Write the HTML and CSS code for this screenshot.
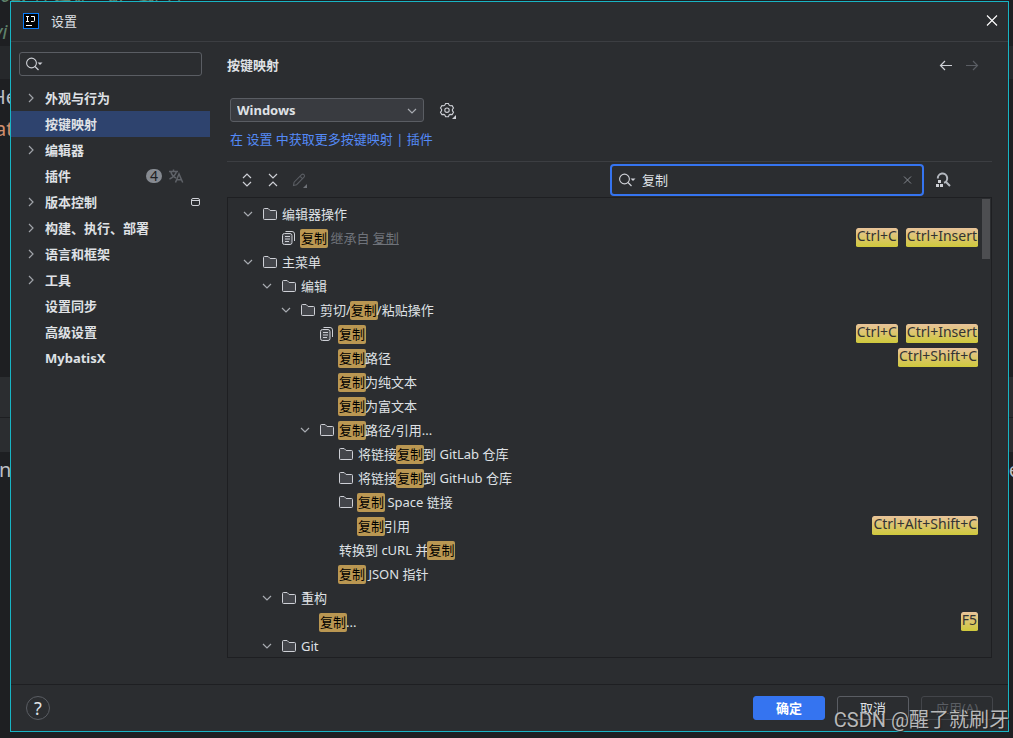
FILE: index.html
```html
<!DOCTYPE html>
<html lang="zh-CN">
<head>
<meta charset="utf-8">
<title>设置</title>
<link rel="stylesheet" href="styles.css">
</head>
<body>
<svg class="defs" width="0" height="0" aria-hidden="true">
  <symbol id="right" viewBox="0 0 16 16"><path d="M6 4l4 4-4 4" fill="none" stroke="#a0a3a9" stroke-width="1.2"/></symbol>
  <symbol id="down" viewBox="0 0 16 16"><path d="M4 6l4 4 4-4" fill="none" stroke="#a8abb1" stroke-width="1.2"/></symbol>
  <symbol id="folder" viewBox="0 0 16 16"><path d="M1.5 3.5a1 1 0 0 1 1-1h3.6l2 2h5.4a1 1 0 0 1 1 1v7a1 1 0 0 1-1 1h-11a1 1 0 0 1-1-1z" fill="#43454a" stroke="#ced0d6"/></symbol>
  <symbol id="copy" viewBox="0 0 16 16"><path d="M4.500 1.500H11a2.500 2.500 0 0 1 2.500 2.500V11" fill="none" stroke="#ced0d6"/><rect x="1.500" y="3.500" width="9.500" height="11" rx="2" fill="#43454a" stroke="#ced0d6"/><path d="M4 6.500h5M4 9h5M4 11.500h4" stroke="#ced0d6"/></symbol>
  <symbol id="search" viewBox="0 0 20 16"><circle cx="6.500" cy="7" r="4.9" fill="none" stroke="#ced0d6" stroke-width="1.1"/><path d="M10 10.500L13.500 14" stroke="#ced0d6" stroke-width="1.2"/><path d="M12.500 6.500h5l-2.500 2.500z" fill="#ced0d6"/></symbol>
</svg>

<div class="editor" aria-hidden="true">
  <div class="band band-top"></div>
  <div class="band band-mid"></div>
  <span class="code code-a">02. 什么是   ar  或 者</span>
  <span class="code code-b">vi</span>
  <span class="code code-c">He</span>
  <span class="code code-d">at</span>
  <span class="code code-e">n</span>
  <span class="code code-f">e</span>
</div>

<div class="dialog" role="dialog" aria-label="设置">
  <header class="titlebar">
    <svg class="logo" width="16" height="16" viewBox="0 0 16 16"><rect x=".5" y=".5" width="15" height="15" fill="#000" stroke="#087cfa"/><path d="M3 3.500h3M4.500 3.500v5M3 8.500h3M8 3.500h3.500v4q0 1-1 1H8M3 12.500h6" fill="none" stroke="#fff"/></svg>
    <h1 class="title">设置</h1>
    <button class="icon-btn" aria-label="关闭"><svg width="16" height="16" viewBox="0 0 16 16"><path d="M3 2.500l10 10M13 2.500l-10 10" stroke="#fff" stroke-width="1.100"/></svg></button>
  </header>

  <div class="body">
    <nav class="sidebar">
      <label class="field">
        <svg width="20" height="16"><use href="#search"/></svg>
        <input class="field-input" type="text" aria-label="搜索设置">
      </label>
      <ul class="menu">
        <li class="item"><svg class="arrow"><use href="#right"/></svg><span>外观与行为</span></li>
        <li class="item selected"><span class="arrow"></span><span>按键映射</span></li>
        <li class="item"><svg class="arrow"><use href="#right"/></svg><span>编辑器</span></li>
        <li class="item"><span class="arrow"></span><span class="grow">插件</span><span class="count">4</span>
          <svg class="lang" width="16" height="16" viewBox="0 0 16 16" fill="none" stroke="#5f6268" stroke-width="1.500"><path d="M1 3.500h9M5.500 1.500v2M8.500 3.500C7.500 7 5 9.500 1.500 11M2.800 3.500C3.500 6.500 5.500 8.800 8 10M7.500 14.500l3.500-8.500 3.700 8.500M8.600 11.800h5"/></svg></li>
        <li class="item"><svg class="arrow"><use href="#right"/></svg><span class="grow">版本控制</span>
          <svg class="project" width="16" height="16" viewBox="0 0 16 16"><rect x="3.500" y="4.500" width="8" height="7" rx="1.500" fill="none" stroke="#ced0d6"/><path d="M3.500 6.500h8" stroke="#ced0d6"/></svg></li>
        <li class="item"><svg class="arrow"><use href="#right"/></svg><span>构建、执行、部署</span></li>
        <li class="item"><svg class="arrow"><use href="#right"/></svg><span>语言和框架</span></li>
        <li class="item"><svg class="arrow"><use href="#right"/></svg><span>工具</span></li>
        <li class="item"><span class="arrow"></span><span>设置同步</span></li>
        <li class="item"><span class="arrow"></span><span>高级设置</span></li>
        <li class="item"><span class="arrow"></span><span>MybatisX</span></li>
      </ul>
    </nav>

    <main class="main">
      <div class="heading">
        <h2 class="crumb">按键映射</h2>
        <button class="icon-btn" aria-label="后退"><svg width="16" height="16" viewBox="0 0 16 16" fill="none" stroke="#ced0d6" stroke-width="1.200"><path d="M14 8.500H2.500M7 4L2.500 8.500 7 13"/></svg></button>
        <button class="icon-btn" aria-label="前进"><svg width="16" height="16" viewBox="0 0 16 16" fill="none" stroke="#5a5d63" stroke-width="1.200"><path d="M2 8.500h11.500M9 4l4.500 4.500L9 13"/></svg></button>
      </div>
      <div class="scheme">
        <div class="select-wrap">
          <select class="select" aria-label="按键映射方案"><option>Windows</option></select>
          <svg class="select-arrow" width="16" height="16"><use href="#down"/></svg>
        </div>
        <button class="icon-btn" aria-label="方案操作"><svg width="20" height="20" viewBox="0 0 20 20"><path d="M7.600 3.500h2.800l.8 1.700 1 .6 1.900-.2 1.400 2.400-1.100 1.500v1.200l1.100 1.500-1.400 2.400-1.900-.2-1 .6-.8 1.700H7.600l-.8-1.700-1-.6-1.900.2-1.400-2.400 1.100-1.500V9.500L2.500 8l1.400-2.400 1.900.2 1-.6z" fill="none" stroke="#ced0d6" stroke-width="1.100"/><circle cx="9" cy="10.200" r="2.200" fill="none" stroke="#ced0d6" stroke-width="1.100"/><path d="M18 15v4h-4z" fill="#ced0d6"/></svg></button>
      </div>
      <p class="links"><a href="#">在 设置 中获取更多按键映射</a> <span>|</span> <a href="#">插件</a></p>

      <div class="toolbar">
        <button class="icon-btn" aria-label="全部展开"><svg width="16" height="16" viewBox="0 0 16 16" fill="none" stroke="#ced0d6" stroke-width="1.200"><path d="M4 6l4-4 4 4M4 10l4 4 4-4"/></svg></button>
        <button class="icon-btn" aria-label="全部收起"><svg width="16" height="16" viewBox="0 0 16 16" fill="none" stroke="#ced0d6" stroke-width="1.200"><path d="M4 2l4 4 4-4M4 14l4-4 4 4"/></svg></button>
        <button class="icon-btn" aria-label="编辑快捷键"><svg width="18" height="16" viewBox="0 0 18 16"><path d="M2.500 13.500l.6-3.300 7.500-7.600q1.200-1 2.400 0 1.200 1.300 0 2.500l-7.400 7.600zM9 4.200l2.600 2.600" fill="none" stroke="#5a5d63" stroke-width="1.100"/><path d="M16 12v4h-4z" fill="#6f7278"/></svg></button>
        <label class="field focused">
          <svg width="20" height="16"><use href="#search"/></svg>
          <input class="field-input" type="text" value="复制" aria-label="搜索操作">
          <button class="icon-btn" aria-label="清除"><svg width="16" height="16" viewBox="0 0 16 16"><path d="M4 4.500l7 7M11 4.500l-7 7" stroke="#868a91"/></svg></button>
        </label>
        <button class="icon-btn" aria-label="按快捷键查找"><svg width="18" height="18" viewBox="0 0 18 18"><path d="M3.800 7.500a4.700 4.700 0 1 1 6.200 4.200M11.500 10.500l4.500 4.500" fill="none" stroke="#b4b8bf" stroke-width="2"/><path d="M4 9h3v3H4zM2 13h3v3H2zM6 13h3v3H6z" fill="#ced0d6"/></svg></button>
      </div>

      <div class="tree">
        <ul class="rows">
          <li class="row"><svg class="twist"><use href="#down"/></svg><svg class="kind"><use href="#folder"/></svg><span class="name">编辑器操作</span></li>
          <li class="row l1"><span class="twist"></span><svg class="kind"><use href="#copy"/></svg><span class="name"><mark>复制</mark> <span class="dim">继承自 <u>复制</u></span></span><kbd>Ctrl+C</kbd><kbd>Ctrl+Insert</kbd></li>
          <li class="row"><svg class="twist"><use href="#down"/></svg><svg class="kind"><use href="#folder"/></svg><span class="name">主菜单</span></li>
          <li class="row l1"><svg class="twist"><use href="#down"/></svg><svg class="kind"><use href="#folder"/></svg><span class="name">编辑</span></li>
          <li class="row l2"><svg class="twist"><use href="#down"/></svg><svg class="kind"><use href="#folder"/></svg><span class="name">剪切/<mark>复制</mark>/粘贴操作</span></li>
          <li class="row l3"><span class="twist"></span><svg class="kind"><use href="#copy"/></svg><span class="name"><mark>复制</mark></span><kbd>Ctrl+C</kbd><kbd>Ctrl+Insert</kbd></li>
          <li class="row l3"><span class="twist"></span><span class="kind"></span><span class="name"><mark>复制</mark>路径</span><kbd>Ctrl+Shift+C</kbd></li>
          <li class="row l3"><span class="twist"></span><span class="kind"></span><span class="name"><mark>复制</mark>为纯文本</span></li>
          <li class="row l3"><span class="twist"></span><span class="kind"></span><span class="name"><mark>复制</mark>为富文本</span></li>
          <li class="row l3"><svg class="twist"><use href="#down"/></svg><svg class="kind"><use href="#folder"/></svg><span class="name"><mark>复制</mark>路径/引用...</span></li>
          <li class="row l4"><span class="twist"></span><svg class="kind"><use href="#folder"/></svg><span class="name">将链接<mark>复制</mark>到 GitLab 仓库</span></li>
          <li class="row l4"><span class="twist"></span><svg class="kind"><use href="#folder"/></svg><span class="name">将链接<mark>复制</mark>到 GitHub 仓库</span></li>
          <li class="row l4"><span class="twist"></span><svg class="kind"><use href="#folder"/></svg><span class="name"><mark>复制</mark> Space 链接</span></li>
          <li class="row l4"><span class="twist"></span><span class="kind"></span><span class="name"><mark>复制</mark>引用</span><kbd>Ctrl+Alt+Shift+C</kbd></li>
          <li class="row l3"><span class="twist"></span><span class="kind"></span><span class="name">转换到 cURL 并<mark>复制</mark></span></li>
          <li class="row l3"><span class="twist"></span><span class="kind"></span><span class="name"><mark>复制</mark> JSON 指针</span></li>
          <li class="row l1"><svg class="twist"><use href="#down"/></svg><svg class="kind"><use href="#folder"/></svg><span class="name">重构</span></li>
          <li class="row l2"><span class="twist"></span><span class="kind"></span><span class="name"><mark>复制</mark>...</span><kbd>F5</kbd></li>
          <li class="row l1"><svg class="twist"><use href="#down"/></svg><svg class="kind"><use href="#folder"/></svg><span class="name">Git</span></li>
        </ul>
        <div class="thumb"></div>
      </div>
    </main>
  </div>

  <footer class="footer">
    <button class="help" aria-label="帮助">?</button>
    <button class="btn primary">确定</button>
    <button class="btn">取消</button>
    <button class="btn" disabled>应用(A)</button>
  </footer>
</div>
<div class="watermark">CSDN @醒了就刷牙</div>
</body>
</html>
```
FILE: styles.css
```css
* { box-sizing: border-box; }

body {
  margin: 0;
  height: 100vh;
  padding: 1px 4px 6px 10px;
  position: relative;
  overflow: hidden;
  background: #1e1f22;
  color: #dfe1e5;
  font: 13px/20px "Noto Sans", "Noto Sans CJK SC", sans-serif;
}

.defs { position: absolute; }
h1, h2, p, ul { margin: 0; padding: 0; font-size: 13px; }
ul { list-style: none; }
button, input, select { font: inherit; color: inherit; }
svg { display: block; flex: none; }

/* Editor behind the dialog */
.editor { position: absolute; inset: 0; overflow: hidden; }
.band { position: absolute; left: 0; right: 0; background: #26282b; }
.band-top { top: 46px; height: 33px; }
.band-mid {
  top: 377px;
  height: 75px;
  background: linear-gradient(#2b2d30 40px, #1e1f22 40px, #1e1f22 41px, #2b2d30 41px);
}
.code {
  position: absolute;
  left: 0;
  font: 20px/24px "Noto Sans", "Noto Sans CJK SC", sans-serif;
  color: #bcbec4;
  white-space: pre;
}
.code-a { top: -17px; color: #5f826b; font-style: italic; }
.code-b { top: 20px; left: -7px; color: #5f826b; font-style: italic; }
.code-c { top: 85px; left: -9px; }
.code-d { top: 117px; left: -5px; color: #cf8e6d; }
.code-e { top: 458px; left: -1px; }
.code-f { top: 458px; left: auto; right: -7px; }

.dialog {
  position: relative;
  display: flex;
  flex-direction: column;
  height: 100%;
  background: #2b2d30;
  border: 1px solid #18b4c4;
}

.titlebar {
  display: flex;
  align-items: center;
  height: 40px;
  padding: 0 8px 2px 12px;
  border-bottom: 1px solid #3c3e42;
}
.title { flex: 1; margin-left: 12px; font-weight: 400; }

.icon-btn {
  display: flex;
  padding: 0;
  border: 0;
  background: none;
}

.body { display: flex; flex: 1; min-height: 0; }

.sidebar { width: 199px; padding-top: 10px; font-weight: 700; }
.field {
  display: flex;
  align-items: center;
  height: 24px;
  padding: 0 6px;
  border: 1px solid #5a5d63;
  border-radius: 3px;
}
.sidebar .field { margin: 0 8px 8px; padding-left: 5px; }
.field-input {
  flex: 1;
  min-width: 0;
  padding: 0;
  border: 0;
  outline: 0;
  background: none;
}
.item {
  display: flex;
  align-items: center;
  height: 26px;
  padding: 0 6px 0 12px;
}
.menu { padding-top: 1px; }
.selected { background: #2e436e; }
.arrow { width: 16px; height: 16px; margin-right: 6px; }
.grow { flex: 1; }
.count {
  width: 16px;
  height: 14px;
  margin-right: 6px;
  border-radius: 7px;
  background: #868a91;
  color: #1e1f22;
  font-size: 14px;
  font-weight: 400;
  line-height: 14px;
  text-align: center;
}
.lang { margin-right: 20px; }

.main {
  display: flex;
  flex: 1;
  flex-direction: column;
  min-width: 0;
  padding: 11px 16px 26px 17px;
}
.heading { display: flex; align-items: center; gap: 10px; height: 24px; padding-right: 12px; }
.crumb { flex: 1; }
.scheme { display: flex; align-items: center; gap: 14px; margin: 21px 3px 0; }
.select-wrap { position: relative; width: 194px; }
.select {
  display: block;
  width: 100%;
  height: 24px;
  padding: 0 6px;
  appearance: none;
  border: 1px solid #5a5d63;
  border-radius: 3px;
  background: #393b40;
  font-weight: 700;
}
.select-arrow { position: absolute; top: 5px; right: 4px; pointer-events: none; }
.links { margin: 7px 3px 12px; color: #548af7; }
.links a { color: inherit; text-decoration: none; }

.toolbar {
  display: flex;
  align-items: center;
  gap: 10px;
  height: 36px;
  padding: 0 40px 0 12px;
  border-top: 1px solid #3c3e42;
}
.toolbar .field {
  width: 314px;
  height: 32px;
  margin-left: auto;
  border: 2px solid #3574f0;
  border-radius: 4px;
}
.toolbar .field-input { margin-left: 4px; }

.tree {
  position: relative;
  flex: 1;
  min-height: 0;
  overflow: hidden;
  padding: 4px 13px 0 12px;
  border: 1px solid #1e1f22;
}
.row { display: flex; align-items: center; height: 24px; }
.l1 { padding-left: 19px; }
.l2 { padding-left: 38px; }
.l3 { padding-left: 57px; }
.l4 { padding-left: 76px; }
.twist { width: 16px; height: 16px; margin-right: 6px; }
.kind { width: 16px; height: 16px; margin-right: 4px; }
.name { flex: 1; white-space: nowrap; }
mark {
  display: inline-block;
  height: 19px;
  margin: 0 -1px;
  padding: 0 1px;
  border-radius: 2px;
  background: #ba9752;
  color: #000;
  line-height: 19px;
}
.dim { color: #6f737a; }
kbd {
  height: 20px;
  margin-left: 8px;
  padding: 0 1px;
  border-bottom: 1px solid transparent;
  border-radius: 2px;
  background: linear-gradient(#e8c39a, #cfc93c) padding-box;
  color: #333;
  font: 14px/16px "Noto Sans", sans-serif;
}
.thumb {
  position: absolute;
  top: 1px;
  right: 1px;
  width: 8px;
  height: 60px;
  background: #4d4e51;
}

.footer {
  display: flex;
  align-items: center;
  gap: 12px;
  height: 47px;
  padding: 0 15px;
  border-top: 1px solid #1e1f22;
}
.help {
  width: 24px;
  height: 24px;
  margin-right: auto;
  padding: 0;
  border: 1px solid #5a5d63;
  border-radius: 50%;
  background: none;
  font-size: 18px;
  line-height: 22px;
}
.btn {
  width: 72px;
  height: 24px;
  padding: 0;
  border: 1px solid #5a5d63;
  border-radius: 3px;
  background: none;
  line-height: 20px;
}
.btn:disabled { color: #5a5d63; border-color: #43454a; }
.primary { border-color: #3574f0; background: #3574f0; color: #fff; font-weight: 700; }

.watermark {
  position: absolute;
  right: 4px;
  bottom: 4px;
  color: #b8b9ba;
  font: 20px/28px Roboto, "Noto Sans CJK SC", sans-serif;
  text-shadow: 1px 1px 1px #222;
  white-space: nowrap;
}
```
